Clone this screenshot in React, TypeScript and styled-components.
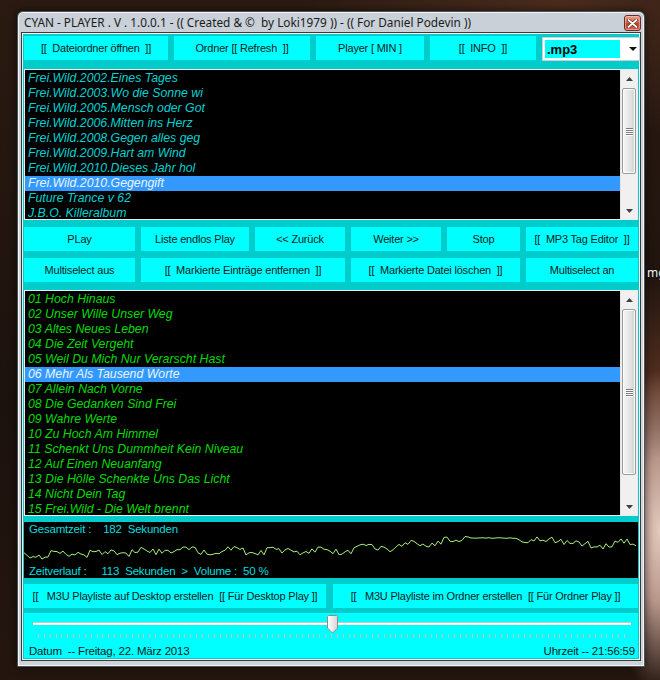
import React from 'react'
import styled, { createGlobalStyle } from 'styled-components'

const GlobalStyle = createGlobalStyle`
  html, body {
    margin: 0;
    padding: 0;
    width: 660px;
    height: 680px;
    overflow: hidden;
    background: #1c120d;
  }
  * {
    box-sizing: border-box;
  }
`

const albums = [
  'Frei.Wild.2002.Eines Tages',
  'Frei.Wild.2003.Wo die Sonne wi',
  'Frei.Wild.2005.Mensch oder Got',
  'Frei.Wild.2006.Mitten ins Herz',
  'Frei.Wild.2008.Gegen alles geg',
  'Frei.Wild.2009.Hart am Wind',
  'Frei.Wild.2010.Dieses Jahr hol',
  'Frei.Wild.2010.Gegengift',
  'Future Trance v 62',
  'J.B.O. Killeralbum',
]

const tracks = [
  '01 Hoch Hinaus',
  '02 Unser Wille Unser Weg',
  '03 Altes Neues Leben',
  '04 Die Zeit Vergeht',
  '05 Weil Du Mich Nur Verarscht Hast',
  '06 Mehr Als Tausend Worte',
  '07 Allein Nach Vorne',
  '08 Die Gedanken Sind Frei',
  '09 Wahre Werte',
  '10 Zu Hoch Am Himmel',
  '11 Schenkt Uns Dummheit Kein Niveau',
  '12 Auf Einen Neuanfang',
  '13 Die Hölle Schenkte Uns Das Licht',
  '14 Nicht Dein Tag',
  '15 Frei.Wild - Die Welt brennt',
]

// envelope of the wave form: [x, y] in svg coords
const envelope: [number, number][] = [
  [0, 19], [76, 17], [176, 15], [276, 15], [326, 14], [396, 8],
  [446, 2], [486, 2], [536, 5], [576, 11], [596, 5], [614, 9],
]

const envAt = (x: number) => {
  for (let i = 0; i < envelope.length - 1; i++) {
    const [x0, y0] = envelope[i]
    const [x1, y1] = envelope[i + 1]
    if (x >= x0 && x <= x1) return y0 + ((y1 - y0) * (x - x0)) / (x1 - x0)
  }
  return envelope[envelope.length - 1][1]
}

const noise = (i: number) => {
  const v = Math.sin(i * 12.9898 + 78.233) * 43758.5453
  return (v - Math.floor(v)) * 2 - 1
}

const wavePoints = (() => {
  const pts: string[] = []
  for (let x = 0; x <= 614; x += 3) {
    const flat = x > 446 && x < 490
    const amp = flat ? 0.4 : 3.6
    const y = envAt(x) + noise(x) * amp + (flat ? 0 : 1.8 * Math.sin(x / 7))
    pts.push(`${x},${Math.max(0.5, Math.min(27, y)).toFixed(1)}`)
  }
  return pts.join(' ')
})()

const App: React.FC = () => {
  return (
    <>
      <GlobalStyle />
      <Desktop>
        <DesktopLabel>mg</DesktopLabel>
        <Window>
          <TitleBar>
            <Title>
              CYAN - PLAYER . V . 1.0.0.1 - (( Created &amp; ©&nbsp; by Loki1979 )) - (( For Daniel Podevin ))
            </Title>
            <CloseButton>
              <svg width="11" height="9" viewBox="0 0 11 9">
                <path
                  d="M1.5 1 L9.5 8 M9.5 1 L1.5 8"
                  stroke="#5a2a20"
                  strokeWidth="3.2"
                  strokeLinecap="round"
                />
                <path
                  d="M1.5 1 L9.5 8 M9.5 1 L1.5 8"
                  stroke="#ffffff"
                  strokeWidth="1.8"
                  strokeLinecap="round"
                />
              </svg>
            </CloseButton>
          </TitleBar>

          <Client>
            <TopRow>
              <Button>{'[[  Dateiordner öffnen  ]]'}</Button>
              <Button>{'Ordner [[ Refresh  ]]'}</Button>
              <Button>{'Player [ MIN ]'}</Button>
              <Button>{'[[  INFO  ]]'}</Button>
              <Combo>
                <ComboValue>.mp3</ComboValue>
                <ComboArrow />
              </Combo>
            </TopRow>

            <ListBox $height={151} $top={8}>
              <Items>
                {albums.map((a, i) => (
                  <Item key={a} $selected={i === 7} $color="#00d2d2">
                    {a}
                  </Item>
                ))}
              </Items>
              <Scrollbar thumbHeight={86} />
            </ListBox>

            <ButtonRow $cols="111px 108px 90px 90px 73px 1fr" $top={7}>
              <Button>PLay</Button>
              <Button>Liste endlos Play</Button>
              <Button>{'<< Zurück'}</Button>
              <Button>{'Weiter >>'}</Button>
              <Button>Stop</Button>
              <Button>{'[[  MP3 Tag Editor  ]]'}</Button>
            </ButtonRow>

            <ButtonRow $cols="111px 204px 169px 1fr" $top={7}>
              <Button>Multiselect aus</Button>
              <Button>{'[[  Markierte Einträge entfernen  ]]'}</Button>
              <Button>{'[[  Markierte Datei löschen  ]]'}</Button>
              <Button>Multiselect an</Button>
            </ButtonRow>

            <ListBox $height={226} $top={8}>
              <Items>
                {tracks.map((t, i) => (
                  <Item key={t} $selected={i === 5} $color="#00dc00">
                    {t}
                  </Item>
                ))}
              </Items>
              <Scrollbar thumbHeight={166} />
            </ListBox>

            <Wave>
              <WaveText>{'Gesamtzeit :    182  Sekunden'}</WaveText>
              <WaveSvg viewBox="0 0 614 28" preserveAspectRatio="none">
                <polyline
                  points={wavePoints}
                  fill="none"
                  stroke="#a6f07a"
                  strokeWidth="1"
                />
              </WaveSvg>
              <WaveText>
                {'Zeitverlauf :     113  Sekunden  >  Volume :  50 %'}
              </WaveText>
            </Wave>

            <ButtonRow $cols="302px 1fr" $top={6} $gap={7}>
              <Button>
                {'[[   M3U Playliste auf Desktop erstellen  [[ Für Desktop Play ]]'}
              </Button>
              <Button>
                {'[[   M3U Playliste im Ordner erstellen  [[ Für Ordner Play ]]'}
              </Button>
            </ButtonRow>

            <SliderPanel>
              <Track>
                <Thumb>
                  <svg width="11" height="19" viewBox="0 0 11 19">
                    <defs>
                      <linearGradient id="thumbFill" x1="0" x2="1" y1="0" y2="0">
                        <stop offset="0" stopColor="#ffffff" />
                        <stop offset="1" stopColor="#d6d6d6" />
                      </linearGradient>
                    </defs>
                    <path
                      d="M1.5 0.5 H9.5 Q10.5 0.5 10.5 1.5 V13 L5.5 18 L0.5 13 V1.5 Q0.5 0.5 1.5 0.5 Z"
                      fill="url(#thumbFill)"
                      stroke="#8c8c8c"
                    />
                  </svg>
                </Thumb>
              </Track>
              <Ticks>
                {Array.from({ length: 101 }).map((_, i) => (
                  <Tick key={i} />
                ))}
              </Ticks>
              <Footer>
                <span>{'Datum  -- Freitag, 22. März 2013'}</span>
                <span>{'Uhrzeit -- 21:56:59'}</span>
              </Footer>
            </SliderPanel>
          </Client>
        </Window>
      </Desktop>
    </>
  )
}

const Scrollbar: React.FC<{ thumbHeight: number }> = ({ thumbHeight }) => (
  <ScrollTrack>
    <ScrollArrow>
      <svg width="7" height="4" viewBox="0 0 7 4">
        <path d="M0 4 L3.5 0 L7 4 Z" fill="#404040" />
      </svg>
    </ScrollArrow>
    <ScrollMiddle>
      <ScrollThumb $height={thumbHeight}>
        <Grip />
        <Grip />
        <Grip />
        <Grip />
      </ScrollThumb>
    </ScrollMiddle>
    <ScrollArrow>
      <svg width="7" height="4" viewBox="0 0 7 4">
        <path d="M0 0 L7 0 L3.5 4 Z" fill="#404040" />
      </svg>
    </ScrollArrow>
  </ScrollTrack>
)

const Desktop = styled.div`
  position: relative;
  width: 660px;
  height: 680px;
  padding: 11px 0 0 17px;
  background:
    radial-gradient(ellipse 60px 160px at 100% 78%, #e2cabd 0%, #b8968a 45%, transparent 100%),
    radial-gradient(ellipse 90px 120px at 100% 58%, #5a3322 0%, transparent 100%),
    radial-gradient(ellipse 260px 140px at 85% 0%, #4a2c1c 0%, transparent 100%),
    linear-gradient(180deg, #2a1a12 0%, #1c120d 60%, #24160f 100%);
`

const DesktopLabel = styled.span`
  position: absolute;
  left: 647px;
  top: 264px;
  font-family: 'Noto Sans', sans-serif;
  font-size: 12px;
  color: #f4f4f4;
  text-shadow: 0 0 2px #000;
`

const Window = styled.div`
  width: 628px;
  height: 656px;
  display: flex;
  flex-direction: column;
  padding: 0 3px 5px 3px;
  border: 1px solid #4d5359;
  border-radius: 6px 6px 0 0;
  background: linear-gradient(180deg, #c9d0d7 0%, #d3d9df 40%, #cdd3d9 100%);
  box-shadow:
    inset 0 0 0 1px rgba(255, 255, 255, 0.75),
    0 0 8px rgba(0, 0, 0, 0.6);
`

const TitleBar = styled.div`
  height: 21px;
  display: flex;
  align-items: flex-start;
  justify-content: space-between;
  padding: 0 0 0 3px;
`

const Title = styled.span`
  margin-top: 3px;
  font-family: 'Noto Sans', 'Liberation Sans', sans-serif;
  font-size: 11.8px;
  line-height: 15px;
  color: #1b1b1b;
  white-space: pre;
`

const CloseButton = styled.div`
  width: 17px;
  height: 16px;
  margin-top: 3px;
  display: flex;
  align-items: center;
  justify-content: center;
  border: 1px solid #6b2b20;
  border-radius: 3px;
  background: linear-gradient(180deg, #e9a08c 0%, #d4634a 48%, #c2452c 52%, #d0664c 100%);
  box-shadow: inset 0 0 0 1px rgba(255, 210, 200, 0.45);
`

const Client = styled.div`
  display: flex;
  flex-direction: column;
  padding: 2px;
  background: #00cccc;
  border: 1px solid #3a3a3a;
  box-shadow: inset 0 0 0 1px #f4f4f4;
`

const TopRow = styled.div`
  margin-top: 1px;
  display: grid;
  grid-template-columns: 144px 136px 108px 106px 1fr;
  column-gap: 6px;
  align-items: start;
`

const ButtonRow = styled.div<{ $cols: string; $top: number; $gap?: number }>`
  margin-top: ${({ $top }) => $top}px;
  display: grid;
  grid-template-columns: ${({ $cols }) => $cols};
  column-gap: ${({ $gap }) => $gap ?? 6}px;
`

const Button = styled.div`
  height: 24px;
  display: flex;
  align-items: center;
  justify-content: center;
  background: #00ffff;
  font-family: 'Liberation Sans', Arial, sans-serif;
  font-size: 11px;
  letter-spacing: -0.2px;
  color: #0c2222;
  white-space: pre;
  overflow: hidden;
  cursor: default;
`

const Combo = styled.div`
  height: 24px;
  margin-top: 1px;
  display: flex;
  align-items: center;
  padding: 2px;
  background: #ffffff;
  border: 1px solid #c8d0d4;
`

const ComboValue = styled.div`
  width: 75px;
  height: 18px;
  display: flex;
  align-items: center;
  padding-left: 2px;
  background: #00ffff;
  font-family: 'Liberation Sans', Arial, sans-serif;
  font-size: 13px;
  font-weight: bold;
  color: #000;
`

const ComboArrow = styled.div`
  margin-left: 9px;
  width: 0;
  height: 0;
  border-left: 4px solid transparent;
  border-right: 4px solid transparent;
  border-top: 4px solid #111;
`

const ListBox = styled.div<{ $height: number; $top: number }>`
  margin-top: ${({ $top }) => $top}px;
  height: ${({ $height }) => $height}px;
  display: flex;
  background: #000;
  border: 1px solid #ececec;
  overflow: hidden;
`

const Items = styled.div`
  flex: 1;
  padding-top: 1px;
  overflow: hidden;
`

const Item = styled.div<{ $selected: boolean; $color: string }>`
  height: 15px;
  line-height: 15px;
  padding-left: 3px;
  font-family: 'Liberation Sans', Arial, sans-serif;
  font-size: 12.3px;
  font-style: italic;
  white-space: pre;
  color: ${({ $selected, $color }) => ($selected ? '#eaf4ff' : $color)};
  background: ${({ $selected }) => ($selected ? '#3399ff' : 'transparent')};
`

const ScrollTrack = styled.div`
  width: 17px;
  display: flex;
  flex-direction: column;
  background: #f0f0f0;
  border-left: 1px solid #e4e4e4;
`

const ScrollArrow = styled.div`
  height: 17px;
  display: flex;
  align-items: center;
  justify-content: center;
`

const ScrollMiddle = styled.div`
  flex: 1;
  padding: 1px 1px 0 1px;
`

const ScrollThumb = styled.div<{ $height: number }>`
  height: ${({ $height }) => $height}px;
  display: flex;
  flex-direction: column;
  align-items: center;
  justify-content: center;
  gap: 1px;
  border: 1px solid #9b9b9b;
  border-radius: 2px;
  background: linear-gradient(90deg, #f6f6f6 0%, #e6e6e6 50%, #cfd3d7 100%);
  box-shadow: inset 0 0 0 1px rgba(255, 255, 255, 0.8);
`

const Grip = styled.div`
  width: 7px;
  height: 1px;
  background: #7a7a7a;
  box-shadow: 0 1px 0 #fff;
`

const Wave = styled.div`
  margin-top: 6px;
  height: 56px;
  display: flex;
  flex-direction: column;
  background: #000;
`

const WaveText = styled.div`
  height: 14px;
  line-height: 14px;
  padding-left: 5px;
  font-family: 'Liberation Sans', Arial, sans-serif;
  font-size: 11.5px;
  letter-spacing: -0.2px;
  color: #00dede;
  white-space: pre;
`

const WaveSvg = styled.svg`
  display: block;
  width: 614px;
  height: 28px;
  overflow: visible;
`

const SliderPanel = styled.div`
  margin-top: 5px;
  height: 45px;
  display: flex;
  flex-direction: column;
  background: #00ffff;
`

const Track = styled.div`
  position: relative;
  margin: 9px 7px 0 9px;
  height: 3px;
  background: #ffffff;
  border-top: 1px solid #c6c6c6;
`

const Thumb = styled.div`
  position: absolute;
  left: 294px;
  top: -8px;
  width: 11px;
  height: 19px;
  line-height: 0;
`

const Ticks = styled.div`
  margin: 9px 12px 0 14px;
  height: 4px;
  display: flex;
  justify-content: space-between;
`

const Tick = styled.div`
  width: 1px;
  height: 4px;
  background: #b2cccc;
`

const Footer = styled.div`
  margin-top: 6px;
  display: flex;
  justify-content: space-between;
  padding: 0 3px 0 5px;
  font-family: 'Liberation Sans', Arial, sans-serif;
  font-size: 11.5px;
  letter-spacing: -0.2px;
  line-height: 14px;
  color: #0c1a1a;
  white-space: pre;
`

export default App
